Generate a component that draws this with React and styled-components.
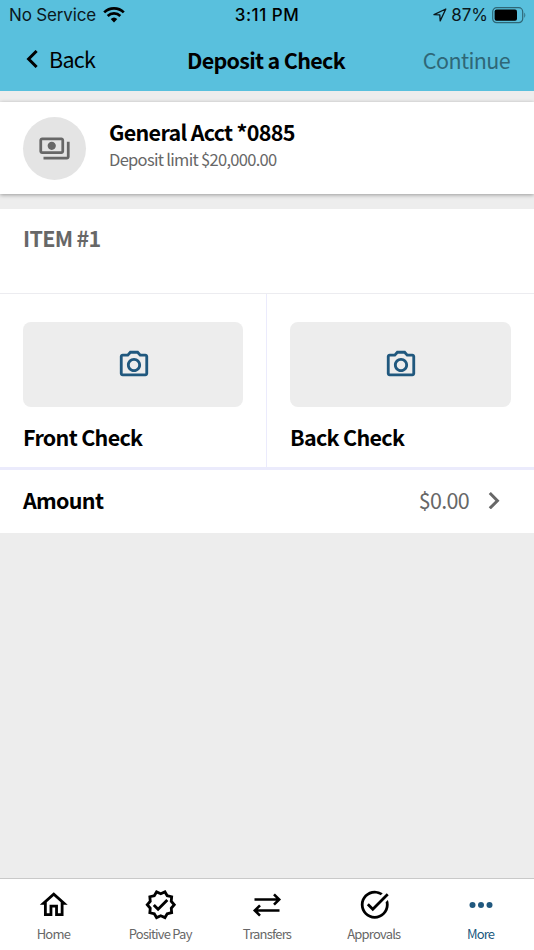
import styled, { createGlobalStyle } from 'styled-components';
import {
  MdOutlineHome,
  MdOutlinePayments,
  MdOutlinePhotoCamera,
  MdOutlineVerified,
  MdTaskAlt,
} from 'react-icons/md';

const colors = {
  header: '#59c0dd',
  page: '#ededed',
  muted: '#676767',
  accent: '#20587e',
  divider: '#ebebfc',
};

const GlobalStyle = createGlobalStyle`
  * {
    box-sizing: border-box;
  }

  body {
    margin: 0;
    background: ${colors.page};
    font-family: 'Noto Sans CJK JP', 'Noto Sans', sans-serif;
    color: #000;
  }
`;

const Screen = styled.div`
  display: flex;
  flex-direction: column;
  width: 534px;
  height: 950px;
  overflow: hidden;
  background: ${colors.page};
`;

const Header = styled.header`
  height: 91px;
  background: ${colors.header};
`;

const StatusBar = styled.div`
  display: grid;
  grid-template-columns: 1fr auto 1fr;
  align-items: center;
  height: 30px;
  padding: 0 9px;
  font-family: Inter, sans-serif;
  font-size: 17px;
  line-height: 30px;
  color: #0b181c;
`;

const StatusGroup = styled.div`
  display: flex;
  align-items: center;
  justify-content: ${({ $end }) => ($end ? 'flex-end' : 'flex-start')};
  gap: ${({ $end }) => ($end ? '4px' : '7px')};
  margin-right: ${({ $end }) => ($end ? '-2px' : '0')};
`;

const Text = styled.span`
  font-size: ${({ $size }) => $size || 21.5}px;
  font-weight: ${({ $bold }) => ($bold ? 700 : 400)};
  line-height: ${({ $line }) => $line || 30}px;
  letter-spacing: ${({ $spacing }) => $spacing ?? -0.7}px;
  color: ${({ $color }) => $color || 'inherit'};
  white-space: nowrap;
`;

const StatusText = styled.span`
  font-weight: ${({ $strong }) => ($strong ? 500 : 400)};
  letter-spacing: ${({ $spacing }) => $spacing || 0}px;
  color: ${({ $strong }) => ($strong ? '#000' : 'inherit')};
  white-space: nowrap;
`;

const NavBar = styled.div`
  display: grid;
  grid-template-columns: 1fr auto 1fr;
  align-items: center;
  height: 59px;
  padding: 0 24px 0 22px;
`;

const BackButton = styled.button`
  display: flex;
  align-items: center;
  gap: 11px;
  padding: 0 0 1px 4px;
  border: none;
  background: none;
  font-family: inherit;
  color: #000;
`;

const ContinueButton = styled(BackButton)`
  justify-content: flex-end;
  padding: 0;
  color: #2f6777;
`;

const AccountCard = styled.section`
  display: flex;
  align-items: center;
  gap: 23px;
  height: 92px;
  margin: 11px 0 15px;
  padding: 0 23px;
  background: #fff;
  box-shadow: 0 1px 4px rgba(0, 0, 0, 0.35);
`;

const Avatar = styled.div`
  display: flex;
  align-items: center;
  justify-content: center;
  width: 63px;
  height: 63px;
  border-radius: 50%;
  background: #e4e4e4;
`;

const AccountInfo = styled.div`
  display: flex;
  flex-direction: column;
  padding-bottom: 7px;
`;

const Item = styled.section`
  background: #fff;
`;

const ItemHeading = styled.div`
  height: 85px;
  padding: 14px 23px;
  border-bottom: 1px solid #ececf0;
`;

const Photos = styled.div`
  display: grid;
  grid-template-columns: 1fr 1fr;
  border-bottom: 3px solid ${colors.divider};
`;

const Photo = styled.div`
  display: flex;
  flex-direction: column;
  gap: 15px;
  height: 173px;
  padding: 28px 23px 0;

  &:first-child {
    border-right: 1px solid ${colors.divider};
  }
`;

const PhotoTile = styled.div`
  display: flex;
  align-items: center;
  justify-content: center;
  height: 85px;
  padding-left: 1px;
  border-radius: 8px;
  background: ${colors.page};
  color: ${colors.accent};
`;

const AmountRow = styled.div`
  display: flex;
  align-items: center;
  justify-content: space-between;
  height: 63px;
  padding: 0 34px 4px 23px;
`;

const AmountValue = styled.div`
  display: flex;
  align-items: center;
  gap: 19px;
`;

const TabBar = styled.nav`
  display: grid;
  grid-template-columns: repeat(5, 1fr);
  height: 72px;
  margin-top: auto;
  border-top: 1px solid #c9c9c9;
  background: #fff;
`;

const Tab = styled.div`
  display: flex;
  flex-direction: column;
  align-items: center;
  padding-top: 8px;
  color: ${({ $active }) => ($active ? colors.accent : '#000')};
`;

const TabIcon = styled.div`
  display: flex;
  align-items: center;
  justify-content: center;
  width: 36px;
  height: 36px;
  margin-left: 1px;
`;

function WifiIcon() {
  return (
    <svg width="22" height="16" viewBox="0 0 22 16" fill="none" stroke="#000" strokeWidth="2.7">
      <path d="M1.2 5.4a14 14 0 0 1 19.6 0" />
      <path d="M4.7 9a9 9 0 0 1 12.6 0" />
      <path d="M11 15.5 7.7 12.1a4.8 4.8 0 0 1 6.6 0z" fill="#000" stroke="none" />
    </svg>
  );
}

function LocationIcon() {
  return (
    <svg width="14" height="14" viewBox="0 0 14 14" fill="none" stroke="#0b181c" strokeWidth="1.3" strokeLinejoin="round">
      <path d="M12.8 1 1 6.6l5.8.3.4 6z" />
    </svg>
  );
}

function BatteryIcon() {
  return (
    <svg width="35" height="17" viewBox="0 0 35 17">
      <rect x=".7" y=".7" width="30" height="15" rx="4" fill="none" stroke="#2f6777" strokeWidth="1.2" />
      <rect x="2.6" y="2.6" width="22.4" height="11.2" rx="2" fill="#000" />
      <path d="M32.3 5.5q2 2.7 0 5.4z" fill="#2f6777" />
    </svg>
  );
}

function ChevronIcon({ right }) {
  return (
    <svg width="12" height="18" viewBox="0 0 12 18" fill="none" stroke={right ? colors.muted : '#000'} strokeWidth="3">
      <path d={right ? 'M1.8 2 9.4 9.7l-7.6 7.6' : 'M10.6 1 2.6 9l8 8'} />
    </svg>
  );
}

function TransfersIcon() {
  return (
    <svg width="36" height="36" viewBox="0 0 36 36" fill="none" stroke="#000" strokeWidth="2.6">
      <path d="M5.5 12.5H30M25 7.3l5.2 5.2-5.2 5.2M30.5 23.5H6M11 18.3l-5.2 5.2 5.2 5.2" />
    </svg>
  );
}

function MoreIcon() {
  return (
    <svg width="36" height="36" viewBox="0 0 36 36" fill={colors.accent}>
      <circle cx="9.5" cy="18" r="3" />
      <circle cx="18" cy="18" r="3" />
      <circle cx="26.5" cy="18" r="3" />
    </svg>
  );
}

const photos = ['Front Check', 'Back Check'];

const tabs = [
  { label: 'Home', icon: MdOutlineHome },
  { label: 'Positive Pay', icon: MdOutlineVerified },
  { label: 'Transfers', icon: TransfersIcon },
  { label: 'Approvals', icon: MdTaskAlt },
  { label: 'More', icon: MoreIcon, active: true },
];

function App() {
  return (
    <Screen>
      <GlobalStyle />
      <Header>
        <StatusBar>
          <StatusGroup>
            <StatusText $spacing={-0.15}>No Service</StatusText>
            <WifiIcon />
          </StatusGroup>
          <StatusText $strong $spacing={0.5}>3:11 PM</StatusText>
          <StatusGroup $end>
            <LocationIcon />
            <StatusText>87%</StatusText>
            <BatteryIcon />
          </StatusGroup>
        </StatusBar>
        <NavBar>
          <BackButton>
            <ChevronIcon />
            <Text>Back</Text>
          </BackButton>
          <Text $bold>Deposit a Check</Text>
          <ContinueButton>
            <Text $spacing={-0.6}>Continue</Text>
          </ContinueButton>
        </NavBar>
      </Header>

      <AccountCard>
        <Avatar>
          <MdOutlinePayments size={33} color={colors.muted} />
        </Avatar>
        <AccountInfo>
          <Text $bold $line={29}>General Acct *0885</Text>
          <Text $size={16.5} $line={26} $color={colors.muted}>
            Deposit limit $20,000.00
          </Text>
        </AccountInfo>
      </AccountCard>

      <Item>
        <ItemHeading>
          <Text $bold $color={colors.muted}>ITEM #1</Text>
        </ItemHeading>
        <Photos>
          {photos.map((label) => (
            <Photo key={label}>
              <PhotoTile>
                <MdOutlinePhotoCamera size={34} />
              </PhotoTile>
              <Text $bold>{label}</Text>
            </Photo>
          ))}
        </Photos>
        <AmountRow>
          <Text $bold>Amount</Text>
          <AmountValue>
            <Text $color={colors.muted}>$0.00</Text>
            <ChevronIcon right />
          </AmountValue>
        </AmountRow>
      </Item>

      <TabBar>
        {tabs.map(({ label, icon: Icon, active }) => (
          <Tab key={label} $active={active}>
            <TabIcon>
              <Icon size={33.5} />
            </TabIcon>
            <Text $size={13} $line={22} $spacing={-0.8} $color={active ? colors.accent : colors.muted}>
              {label}
            </Text>
          </Tab>
        ))}
      </TabBar>
    </Screen>
  );
}

export default App;
